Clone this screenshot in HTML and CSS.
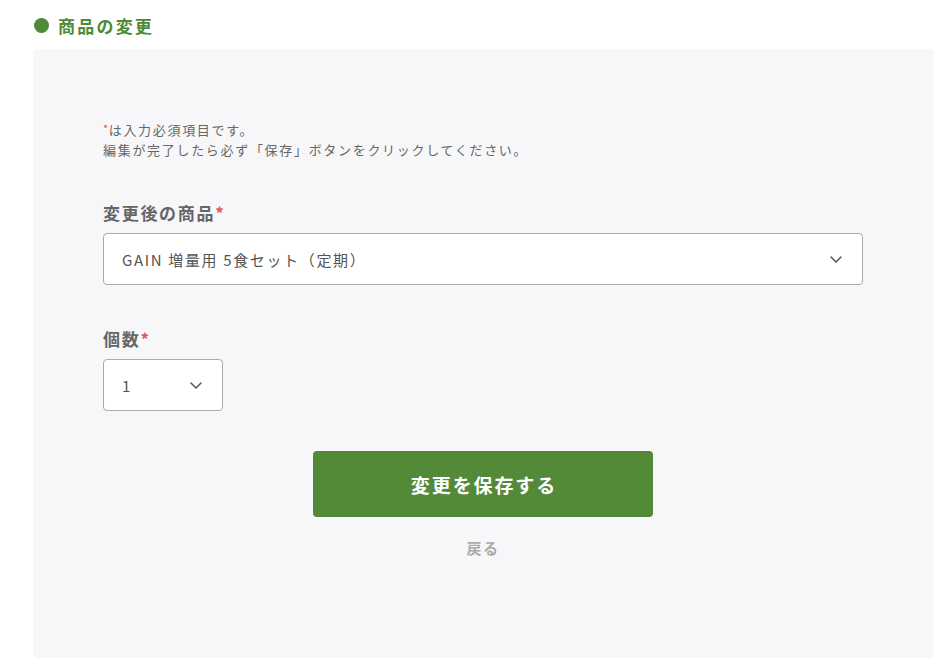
FILE: index.html
```html
<!DOCTYPE html>
<html lang="ja">
<head>
<meta charset="utf-8">
<title>商品の変更</title>
<link rel="stylesheet" href="styles.css">
</head>
<body>
<div class="page">
  <h2 class="heading"><span class="dot"></span>商品の変更</h2>
  <section class="panel">
    <div class="notes">
      <p><span class="req-sm">*</span>は入力必須項目です。</p>
      <p>編集が完了したら必ず「保存」ボタンをクリックしてください。</p>
    </div>
    <div class="field">
      <div class="label">変更後の商品<span class="req">*</span></div>
      <div class="select select-wide">
        <span class="value">GAIN 増量用 5食セット（定期）</span>
        <svg class="chev" width="12" height="7" viewBox="0 0 12 7"><path d="M1 1l5 5 5-5" fill="none" stroke="#555" stroke-width="1.5" stroke-linecap="round" stroke-linejoin="round"/></svg>
      </div>
    </div>
    <div class="field field-qty">
      <div class="label">個数<span class="req">*</span></div>
      <div class="select select-small">
        <span class="value">1</span>
        <svg class="chev" width="12" height="7" viewBox="0 0 12 7"><path d="M1 1l5 5 5-5" fill="none" stroke="#555" stroke-width="1.5" stroke-linecap="round" stroke-linejoin="round"/></svg>
      </div>
    </div>
    <div class="actions">
      <button class="btn-save" type="button">変更を保存する</button>
      <a class="back" href="#">戻る</a>
    </div>
  </section>
</div>
</body>
</html>
```

FILE: styles.css
```css
* { box-sizing: border-box; }
html, body { margin: 0; padding: 0; background: #fff; }
body {
  font-family: "Noto Sans CJK JP", "Noto Sans", sans-serif;
  color: #666;
}
.page {
  padding: 12px 11px 0 33px;
}
.heading {
  margin: 0 0 11px 0;
  display: flex;
  align-items: center;
  height: 26px;
  font-size: 17px;
  font-weight: 700;
  letter-spacing: 0.13em;
  color: #4f8a36;
}
.dot {
  width: 15px;
  height: 15px;
  border-radius: 50%;
  background: #4f8a36;
  margin: 0 9px 0 1px;
  flex: none;
}
.panel {
  width: 900px;
  background: #f7f7f9;
  border-radius: 4px;
  padding: 71px 70px 100px 70px;
}
.notes p {
  margin: 0;
  font-size: 13px;
  line-height: 20px;
  letter-spacing: 0.13em;
  color: #666;
}
.req-sm {
  color: #e45454;
  font-size: 11px;
  line-height: 0;
  vertical-align: 2px;
  letter-spacing: 0.05em;
}
.field { margin-top: 41px; }
.field-qty { margin-top: 42px; }
.label {
  font-size: 17px;
  font-weight: 700;
  line-height: 24px;
  letter-spacing: 0.1em;
  color: #666;
  margin-bottom: 8px;
}
.req { color: #e45454; }
.select {
  height: 52px;
  background: #fff;
  border: 1px solid #aaa;
  border-radius: 4px;
  display: flex;
  align-items: center;
  justify-content: space-between;
  padding: 0 20px 0 18px;
}
.select-wide { width: 760px; }
.select-small { width: 120px; }
.value {
  font-size: 15px;
  letter-spacing: 0.11em;
  color: #555;
}
.chev { flex: none; }
.actions {
  margin-top: 40px;
  display: flex;
  flex-direction: column;
  align-items: center;
}
.btn-save {
  width: 340px;
  height: 66px;
  border: none;
  border-radius: 4px;
  background: #528a38;
  color: #fff;
  font-family: inherit;
  font-size: 19px;
  font-weight: 700;
  letter-spacing: 0.1em;
  padding: 0 0 0 2px;
}
.back {
  margin-top: 21px;
  font-size: 15px;
  font-weight: 700;
  line-height: 20px;
  letter-spacing: 0.1em;
  color: #aaa;
  text-decoration: none;
}
```
